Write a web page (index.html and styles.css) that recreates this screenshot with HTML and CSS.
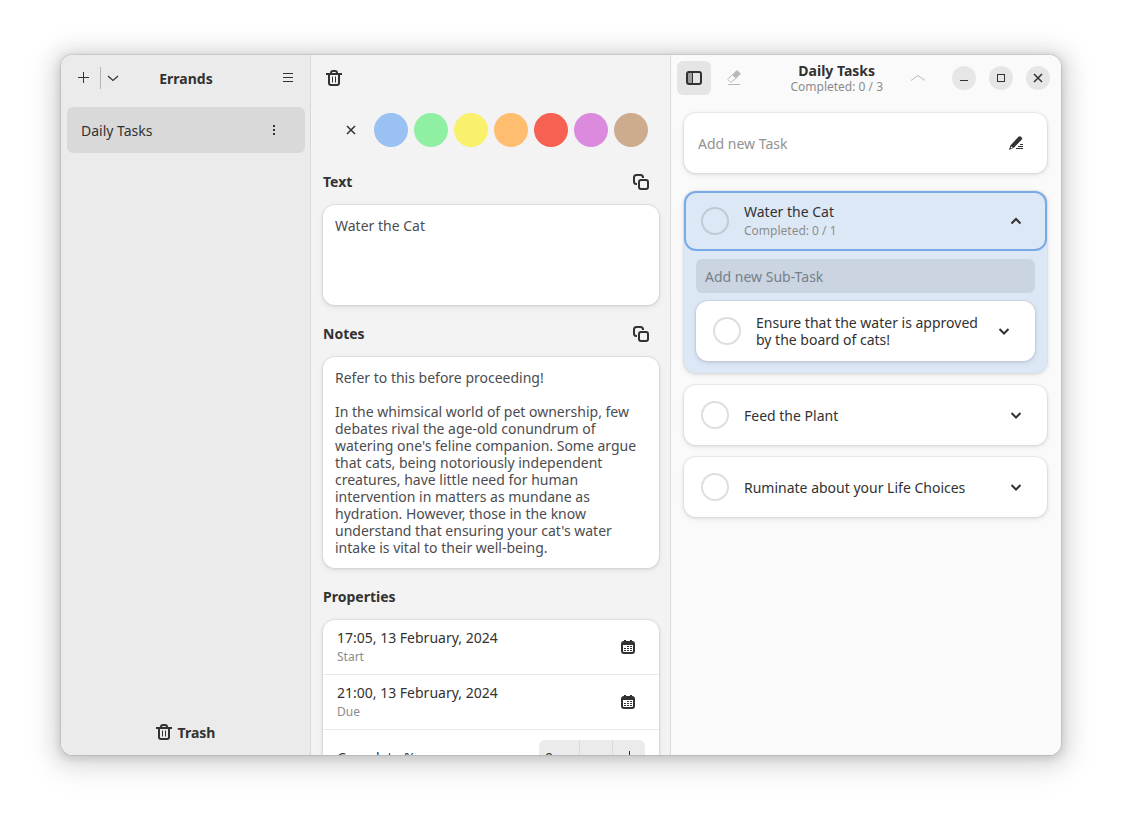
FILE: index.html
```html
<!DOCTYPE html>
<html lang="en">
<head>
  <meta charset="UTF-8">
  <meta name="viewport" content="width=device-width, initial-scale=1.0">
  <title>Errands</title>
  <link rel="stylesheet" href="styles.css">
</head>
<body>
  <!-- Shared icons -->
  <svg class="icon-defs" aria-hidden="true">
    <symbol id="icon-trash" viewBox="0 0 16 16">
      <path d="M5 3.500V3q0-2 2-2h2q2 0 2 2v0.500M0 4h16M3 4.500V13q0 2 2 2h6q2 0 2-2V4.500" fill="none" stroke="currentColor" stroke-width="2"/>
      <path d="M6.500 6.500v6M9.500 6.500v6" fill="none" stroke="currentColor"/>
    </symbol>
    <symbol id="icon-copy" viewBox="0 0 16 16">
      <path d="M4 10H3.500Q1 10 1 7.500v-4Q1 1 3.500 1h4Q10 1 10 3.500V4" fill="none" stroke="currentColor" stroke-width="2"/>
      <rect x="6" y="6" width="9" height="9" rx="2" fill="none" stroke="currentColor" stroke-width="2"/>
    </symbol>
    <symbol id="icon-down" viewBox="0 0 16 16">
      <path d="M3.500 6L8 10.500L12.500 6" fill="none" stroke="currentColor" stroke-width="2"/>
    </symbol>
    <symbol id="icon-up" viewBox="0 0 16 16">
      <path d="M3.500 10.500L8 6L12.500 10.500" fill="none" stroke="currentColor" stroke-width="2"/>
    </symbol>
    <symbol id="icon-close" viewBox="0 0 16 16">
      <path d="M4 4l8 8M12 4l-8 8" fill="none" stroke="currentColor" stroke-width="1.500"/>
    </symbol>
    <symbol id="icon-calendar" viewBox="0 0 16 16">
      <path fill="currentColor" fill-rule="evenodd" d="M4 1h2v1h4V1h2v1a3 3 0 0 1 3 3v7a3 3 0 0 1-3 3H4a3 3 0 0 1-3-3V5a3 3 0 0 1 3-3zM3 6v6q0 1 1 1h8q1 0 1-1V6z"/>
      <path fill="currentColor" d="M7 7h2v1H7zM10 7h2v1h-2zM4 9h2v1H4zM7 9h2v1H7zM10 9h2v1h-2zM4 11h2v1H4zM7 11h2v1H7zM10 11h2v1h-2z"/>
    </symbol>
  </svg>

  <div class="window">
    <!-- Task lists -->
    <aside class="sidebar">
      <header class="sidebar-header">
        <div class="split-button">
          <button class="icon-button" aria-label="Add list">
            <svg class="icon" viewBox="0 0 16 16"><path d="M7.500 2v11M2 7.500h11" fill="none" stroke="currentColor"/></svg>
          </button>
          <button class="icon-button narrow" aria-label="More ways to add">
            <svg class="icon" viewBox="0 0 16 16"><path d="M3 6l5 4.500l5-4.500" fill="none" stroke="currentColor" stroke-width="1.200"/></svg>
          </button>
        </div>
        <h1 class="title">Errands</h1>
        <button class="icon-button menu-button" aria-label="Main menu">
          <svg class="icon" viewBox="0 0 16 16"><path d="M3 3.500h10M3 7.500h10M3 11.500h10" fill="none" stroke="currentColor"/></svg>
        </button>
      </header>
      <nav class="lists">
        <div class="list-row">
          <a class="list-link" href="#daily">Daily Tasks</a>
          <button class="icon-button" aria-label="List menu">
            <svg class="icon" viewBox="0 0 16 16"><path fill="currentColor" d="M7 3h2v2H7zM7 7h2v2H7zM7 11h2v2H7z"/></svg>
          </button>
        </div>
      </nav>
      <button class="trash-button">
        <svg class="icon"><use href="#icon-trash"/></svg>
        Trash
      </button>
    </aside>

    <!-- Task details -->
    <section class="details">
      <header class="details-header">
        <button class="icon-button" aria-label="Move to trash">
          <svg class="icon"><use href="#icon-trash"/></svg>
        </button>
      </header>
      <div class="details-body">
        <div class="colors">
          <button class="icon-button" aria-label="No color">
            <svg class="icon"><use href="#icon-close"/></svg>
          </button>
          <button class="color blue" aria-label="Blue"></button>
          <button class="color green" aria-label="Green"></button>
          <button class="color yellow" aria-label="Yellow"></button>
          <button class="color orange" aria-label="Orange"></button>
          <button class="color red" aria-label="Red"></button>
          <button class="color purple" aria-label="Purple"></button>
          <button class="color brown" aria-label="Brown"></button>
        </div>

        <div class="group">
          <div class="group-header">
            <label class="group-title" for="text">Text</label>
            <button class="icon-button" aria-label="Copy text">
              <svg class="icon"><use href="#icon-copy"/></svg>
            </button>
          </div>
          <textarea class="card text-area short" id="text">Water the Cat</textarea>
        </div>

        <div class="group">
          <div class="group-header">
            <label class="group-title" for="notes">Notes</label>
            <button class="icon-button" aria-label="Copy notes">
              <svg class="icon"><use href="#icon-copy"/></svg>
            </button>
          </div>
          <textarea class="card text-area" id="notes" rows="11">Refer to this before proceeding!

In the whimsical world of pet ownership, few debates rival the age-old conundrum of watering one's feline companion. Some argue that cats, being notoriously independent creatures, have little need for human intervention in matters as mundane as hydration. However, those in the know understand that ensuring your cat's water intake is vital to their well-being.</textarea>
        </div>

        <div class="group">
          <div class="group-header">
            <h2 class="group-title">Properties</h2>
          </div>
          <div class="card properties">
            <div class="property">
              <div class="labels">
                <span>17:05, 13 February, 2024</span>
                <span class="subtitle">Start</span>
              </div>
              <button class="icon-button" aria-label="Pick start date">
                <svg class="icon"><use href="#icon-calendar"/></svg>
              </button>
            </div>
            <div class="property">
              <div class="labels">
                <span>21:00, 13 February, 2024</span>
                <span class="subtitle">Due</span>
              </div>
              <button class="icon-button" aria-label="Pick due date">
                <svg class="icon"><use href="#icon-calendar"/></svg>
              </button>
            </div>
            <div class="property">
              <label for="complete">Complete %</label>
              <div class="spin">
                <input class="spin-value" id="complete" type="text" inputmode="numeric" value="0">
                <button class="spin-button" aria-label="Decrease">
                  <svg class="icon" viewBox="0 0 16 16"><path d="M3 7.500h11" fill="none" stroke="currentColor"/></svg>
                </button>
                <button class="spin-button" aria-label="Increase">
                  <svg class="icon" viewBox="0 0 16 16"><path d="M8.500 2v11M3 7.500h11" fill="none" stroke="currentColor"/></svg>
                </button>
              </div>
            </div>
          </div>
        </div>
      </div>
    </section>

    <!-- Tasks -->
    <main class="tasks">
      <header class="tasks-header">
        <button class="icon-button active" aria-label="Toggle details">
          <svg class="icon" viewBox="0 0 16 16">
            <path fill="currentColor" opacity="0.4" d="M2 3h4v10H2z"/>
            <path d="M6.500 3v10" fill="none" stroke="currentColor"/>
            <rect x="1" y="2" width="14" height="12" rx="2" fill="none" stroke="currentColor" stroke-width="2"/>
          </svg>
        </button>
        <button class="icon-button" aria-label="Delete completed" disabled>
          <svg class="icon" viewBox="0 0 16 16">
            <path fill="currentColor" d="M10.200 0.700Q11 0 11.800 0.700L14.200 3Q15 3.800 14.200 4.600L10 8.800L6 4.800z"/>
            <path d="M6 4.800L2.300 8.500Q1.500 9.300 2.300 10.100L3.900 11.700Q4.700 12.500 5.500 11.700L9.800 8.600" fill="none" stroke="currentColor"/>
            <path d="M2 14.500h12" fill="none" stroke="currentColor"/>
          </svg>
        </button>
        <div class="heading">
          <h2 class="title">Daily Tasks</h2>
          <span class="subtitle">Completed: 0 / 3</span>
        </div>
        <button class="icon-button" aria-label="Scroll up" disabled>
          <svg class="icon" viewBox="0 0 16 16"><path d="M1 10.500L8 5.500L15 10.500" fill="none" stroke="currentColor"/></svg>
        </button>
        <div class="window-controls">
          <button class="window-button" aria-label="Minimize">
            <svg class="icon" viewBox="0 0 16 16"><path d="M4 10.500h8" fill="none" stroke="currentColor"/></svg>
          </button>
          <button class="window-button" aria-label="Maximize">
            <svg class="icon" viewBox="0 0 16 16"><rect x="4.500" y="4.500" width="7" height="7" fill="none" stroke="currentColor"/></svg>
          </button>
          <button class="window-button" aria-label="Close">
            <svg class="icon"><use href="#icon-close"/></svg>
          </button>
        </div>
      </header>

      <div class="card new-task">
        <input class="new-task-input" type="text" placeholder="Add new Task" aria-label="Add new Task">
        <svg class="icon" viewBox="0 0 16 16">
          <path fill="currentColor" d="M1 15l1.400-4.500L10.500 1.700Q11.500 0.700 12.700 1.600L13.700 2.500Q14.700 3.600 13.800 4.600L5.800 12.800z"/>
          <path fill="#fff" d="M3.200 11.200l1.600 1.600l-1.500 0.400l-0.500-0.500z"/>
          <path fill="currentColor" d="M12 9h3v1h-3zM10 11h5v1h-5zM8 13h7v1H8z"/>
        </svg>
      </div>

      <div class="task-list">
        <article class="card task-blue">
          <div class="task selected">
            <input class="check" type="checkbox" id="cat">
            <label class="labels" for="cat">
              <span>Water the Cat</span>
              <span class="subtitle">Completed: 0 / 1</span>
            </label>
            <button class="icon-button" aria-label="Collapse">
              <svg class="icon"><use href="#icon-up"/></svg>
            </button>
          </div>
          <div class="sub-tasks">
            <input class="sub-task-input" type="text" placeholder="Add new Sub-Task" aria-label="Add new Sub-Task">
            <div class="card task">
              <input class="check" type="checkbox" id="water">
              <label class="labels" for="water">Ensure that the water is approved by the board of cats!</label>
              <button class="icon-button" aria-label="Expand">
                <svg class="icon"><use href="#icon-down"/></svg>
              </button>
            </div>
          </div>
        </article>
        <article class="card task">
          <input class="check" type="checkbox" id="plant">
          <label class="labels" for="plant">Feed the Plant</label>
          <button class="icon-button" aria-label="Expand">
            <svg class="icon"><use href="#icon-down"/></svg>
          </button>
        </article>
        <article class="card task">
          <input class="check" type="checkbox" id="life">
          <label class="labels" for="life">Ruminate about your Life Choices</label>
          <button class="icon-button" aria-label="Expand">
            <svg class="icon"><use href="#icon-down"/></svg>
          </button>
        </article>
      </div>
    </main>
  </div>
</body>
</html>
```
FILE: styles.css
```css
* {
  box-sizing: border-box;
}

body {
  margin: 0;
  height: 100vh;
  padding: 55px 61px 67px;
  background-color: #fff;
  color: #323232;
  font-family: "Noto Sans", sans-serif;
  font-size: 14px;
  line-height: 17px;
}

button,
input,
textarea {
  margin: 0;
  padding: 0;
  border: none;
  background: none;
  color: inherit;
  font: inherit;
}

h1, h2 {
  margin: 0;
  font-size: 14px;
}

.icon-defs {
  display: none;
}

.icon {
  display: block;
  flex: none;
  width: 16px;
  height: 16px;
}

.window {
  display: grid;
  grid-template-columns: 250px 360px 1fr;
  height: 100%;
  overflow: hidden;
  border-radius: 12px;
  box-shadow:
    0 0 0 1px rgba(0, 0, 0, 0.08),
    0 2px 8px 2px rgba(0, 0, 0, 0.13),
    0 3px 20px 10px rgba(0, 0, 0, 0.09),
    0 6px 32px 16px rgba(0, 0, 0, 0.04);
}

.icon-button {
  display: flex;
  flex: none;
  align-items: center;
  justify-content: center;
  width: 34px;
  height: 34px;
  border-radius: 6px;
}

.icon-button.active {
  background-color: #e5e5e5;
}

.icon-button:disabled {
  color: #b9b9b9;
}

.card {
  border-radius: 12px;
  background-color: #fff;
  box-shadow:
    0 0 0 1px rgba(0, 0, 0, 0.04),
    0 1px 3px 1px rgba(0, 0, 0, 0.07),
    0 2px 6px 2px rgba(0, 0, 0, 0.03);
}

.subtitle {
  color: #8c8c8c;
  font-size: 12px;
}

.labels {
  display: flex;
  flex: 1;
  flex-direction: column;
  gap: 2px;
}

/* Sidebar */
.sidebar {
  display: flex;
  flex-direction: column;
  border-right: 1px solid #d9d9d9;
  background-color: #ebebeb;
}

.sidebar-header {
  display: grid;
  grid-template-columns: 1fr auto 1fr;
  align-items: center;
  padding: 6px 5px 6px 6px;
}

.split-button {
  display: flex;
  align-items: center;
}

.icon-button.narrow {
  width: 24px;
  height: 22px;
  margin-left: -1px;
  border-left: 1px solid #b4b4b4;
  border-radius: 0;
}

.menu-button {
  justify-self: end;
}

.lists {
  flex: 1;
  padding: 6px 5px 6px 6px;
}

.list-row {
  display: flex;
  align-items: center;
  padding: 6px 14px;
  border-radius: 6px;
  background-color: #d9d9d9;
}

.list-link {
  flex: 1;
  color: inherit;
  text-decoration: none;
}

.trash-button {
  display: flex;
  align-items: center;
  justify-content: center;
  gap: 6px;
  height: 34px;
  margin: 6px;
  font-weight: bold;
}

/* Details */
.details {
  display: flex;
  flex-direction: column;
  min-height: 0;
  border-right: 1px solid #dcdcdc;
  background-color: #f3f3f3;
}

.details-header {
  padding: 6px;
}

.details-body {
  display: flex;
  flex: 1;
  flex-direction: column;
  gap: 12px;
  min-height: 0;
  overflow: hidden;
  padding: 12px 11px 0 12px;
}

.colors {
  display: flex;
  justify-content: center;
  gap: 6px;
  margin-bottom: 6px;
}

.color {
  width: 34px;
  height: 34px;
  border-radius: 50%;
}

.blue { background-color: #99c1f1; }
.green { background-color: #8ff0a4; }
.yellow { background-color: #f9f06b; }
.orange { background-color: #ffbe6f; }
.red { background-color: #f66151; }
.purple { background-color: #dc8add; }
.brown { background-color: #cdab8f; }

.group {
  display: flex;
  flex: none;
  flex-direction: column;
  gap: 6px;
}

.group-header {
  display: flex;
  align-items: center;
  justify-content: space-between;
  height: 34px;
  padding-right: 1px;
}

.group-title {
  font-weight: bold;
  line-height: 16px;
}

.text-area {
  display: block;
  width: 100%;
  padding: 12px;
  overflow: hidden;
  color: #4c4c50;
  resize: none;
}

.text-area.short {
  height: 100px;
}

.property {
  display: flex;
  align-items: center;
  justify-content: space-between;
  padding: 9px 14px;
}

.property + .property {
  border-top: 1px solid #e8e8e8;
}

.property:last-child {
  padding: 10px 14px;
}

.spin {
  display: flex;
  height: 34px;
  overflow: hidden;
  border-radius: 6px;
  background-color: #ebebeb;
}

.spin-value {
  width: 40px;
  padding: 0 6px;
}

.spin-button {
  display: flex;
  align-items: center;
  justify-content: center;
  width: 33px;
  border-left: 1px solid #dadada;
}

/* Tasks */
.tasks {
  background-color: #fafafa;
}

.tasks-header {
  display: flex;
  align-items: center;
  gap: 6px;
  height: 46px;
  padding: 6px 11px 6px 6px;
}

.heading {
  display: flex;
  flex-direction: column;
  align-items: center;
  margin-left: auto;
  margin-right: 12px;
}

.heading .subtitle {
  line-height: 16px;
}

.window-controls {
  display: flex;
  gap: 13px;
  margin-left: 11px;
}

.window-button {
  display: flex;
  align-items: center;
  justify-content: center;
  width: 24px;
  height: 24px;
  border-radius: 50%;
  background-color: #e6e6e6;
}

.new-task {
  display: flex;
  align-items: center;
  height: 60px;
  margin: 12px 14px 18px 13px;
  padding: 0 23px 0 14px;
}

.new-task-input {
  flex: 1;
  min-width: 0;
  height: 34px;
}

.new-task-input::placeholder {
  color: #929292;
}

.task-list {
  display: flex;
  flex-direction: column;
  gap: 12px;
  margin: 0 14px 12px 13px;
}

.task {
  display: flex;
  align-items: center;
  min-height: 60px;
  padding: 6px 14px 6px 17px;
}

.task .labels {
  padding: 0 8px 0 15px;
}

.check {
  flex: none;
  width: 28px;
  height: 28px;
  border: 2px solid rgba(0, 0, 0, 0.13);
  border-radius: 50%;
  appearance: none;
}

.task-blue {
  background-color: #dde8f6;
}

.task.selected {
  border-radius: 12px;
  outline: 2px solid #78aae8;
  outline-offset: -2px;
}

.sub-tasks {
  display: flex;
  flex-direction: column;
  gap: 8px;
  padding: 8px 12px 12px;
}

.sub-task-input {
  height: 34px;
  padding: 0 9px;
  border-radius: 6px;
  background-color: #cad5e1;
}

.sub-task-input::placeholder {
  color: #76808a;
}
```
